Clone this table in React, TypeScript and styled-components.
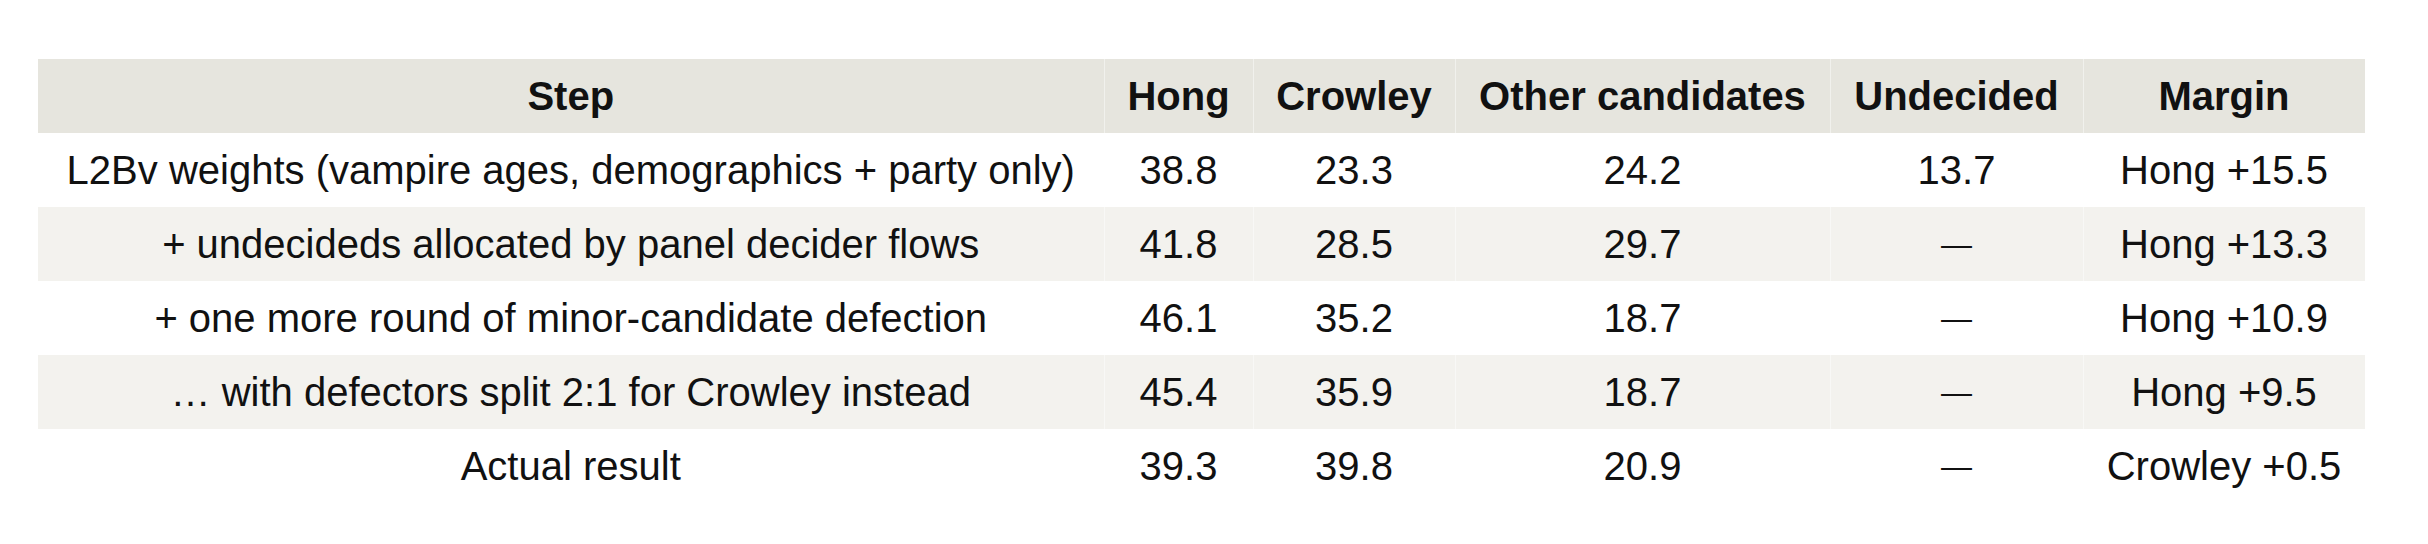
import * as React from 'react'
import styled, { createGlobalStyle } from 'styled-components'

const GlobalStyle = createGlobalStyle`
  html, body {
    margin: 0;
    padding: 0;
    background: #ffffff;
  }
  body {
    font-family: "Liberation Sans", Arial, Helvetica, sans-serif;
    color: #111111;
  }
`

const Page = styled.div`
  box-sizing: border-box;
  width: 2428px;
  height: 544px;
  padding: 59px 0 0 38px;
`

const Table = styled.table`
  border-collapse: collapse;
  table-layout: fixed;
  width: 2327px;
  font-size: 40px;
  line-height: 46px;
`

const HeadRow = styled.tr`
  background: #e6e5de;
`

const Row = styled.tr<{ $shaded: boolean }>`
  background: ${p => (p.$shaded ? '#f3f2ee' : '#ffffff')};
`

const HeadCell = styled.th<{ $width: number }>`
  box-sizing: border-box;
  width: ${p => p.$width}px;
  height: 74px;
  padding: 0 20px;
  font-weight: 700;
  text-align: center;
  vertical-align: middle;
  white-space: nowrap;
  border-right: 1px solid rgba(255, 255, 255, 0.45);
`

const Cell = styled.td`
  box-sizing: border-box;
  height: 74px;
  padding: 0 20px;
  font-weight: 400;
  text-align: center;
  vertical-align: middle;
  white-space: nowrap;
  border-right: 1px solid rgba(255, 255, 255, 0.45);
`

const Dash = styled.span`
  font-size: 31px;
  line-height: 1;
  vertical-align: 0.1em;
`

interface IStep {
  step: string
  hong: string
  crowley: string
  other: string
  undecided: string | null
  margin: string
}

const columns = [
  { label: 'Step', width: 1066 },
  { label: 'Hong', width: 149 },
  { label: 'Crowley', width: 202 },
  { label: 'Other candidates', width: 375 },
  { label: 'Undecided', width: 253 },
  { label: 'Margin', width: 282 },
]

const steps: IStep[] = [
  { step: 'L2Bv weights (vampire ages, demographics + party only)', hong: '38.8', crowley: '23.3', other: '24.2', undecided: '13.7', margin: 'Hong +15.5' },
  { step: '+ undecideds allocated by panel decider flows', hong: '41.8', crowley: '28.5', other: '29.7', undecided: null, margin: 'Hong +13.3' },
  { step: '+ one more round of minor-candidate defection', hong: '46.1', crowley: '35.2', other: '18.7', undecided: null, margin: 'Hong +10.9' },
  { step: '\u2026 with defectors split 2:1 for Crowley instead', hong: '45.4', crowley: '35.9', other: '18.7', undecided: null, margin: 'Hong +9.5' },
  { step: 'Actual result', hong: '39.3', crowley: '39.8', other: '20.9', undecided: null, margin: 'Crowley +0.5' },
]

export default () => {
  return (
    <Page>
      <GlobalStyle />
      <Table>
        <thead>
          <HeadRow>
            {columns.map(c => <HeadCell key={c.label} $width={c.width}>{c.label}</HeadCell>)}
          </HeadRow>
        </thead>
        <tbody>
          {steps.map((s, i) => (
            <Row key={s.step} $shaded={i % 2 === 1}>
              <Cell>{s.step}</Cell>
              <Cell>{s.hong}</Cell>
              <Cell>{s.crowley}</Cell>
              <Cell>{s.other}</Cell>
              <Cell>{s.undecided ?? <Dash>{'\u2014'}</Dash>}</Cell>
              <Cell>{s.margin}</Cell>
            </Row>
          ))}
        </tbody>
      </Table>
    </Page>
  )
}
